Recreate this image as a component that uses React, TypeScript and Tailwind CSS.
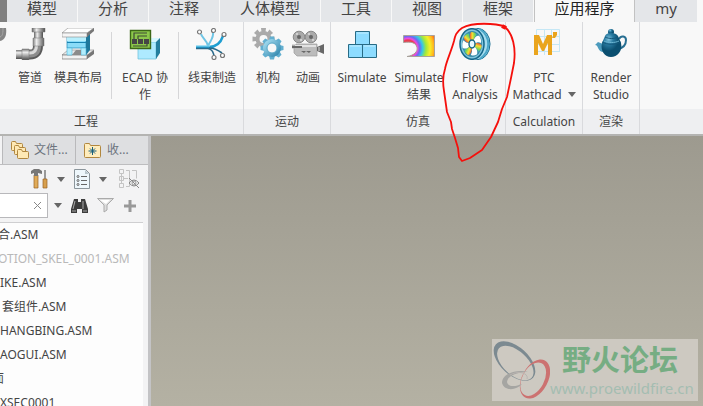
import type { ReactNode } from "react";

const PipeIcon = () => (
  <svg width="32" height="32" viewBox="0 0 32 32">
    <defs>
      <linearGradient id="pv" x1="0" x2="1" y1="0" y2="0"><stop offset="0" stopColor="#666" /><stop offset=".35" stopColor="#eee" /><stop offset="1" stopColor="#4c4c4c" /></linearGradient>
      <linearGradient id="ph" x1="0" x2="0" y1="0" y2="1"><stop offset="0" stopColor="#777" /><stop offset=".3" stopColor="#eee" /><stop offset="1" stopColor="#4c4c4c" /></linearGradient>
    </defs>
    <g fill="none">
      <path d="M14 26.500h2q8 0 8-9" stroke="#5a5a5a" strokeWidth="10" />
      <path d="M14 26h2q7.500 0 7.500-8.500" stroke="#8c8c8c" strokeWidth="7" />
      <path d="M14 25h2q6.500 0 6.500-7.500" stroke="#dadada" strokeWidth="3" />
    </g>
    <path d="M2 22h6v9H2z" fill="url(#ph)" />
    <path d="M8 21h7v11H8z" fill="url(#ph)" stroke="#777" strokeWidth=".5" />
    <path d="M20 3h9v8h-9z" fill="url(#pv)" />
    <path d="M18 0h13v4H18zM19 10h11v8H19z" fill="url(#pv)" stroke="#777" strokeWidth=".5" />
  </svg>
);

const MoldIcon = () => (
  <svg width="32" height="32" viewBox="0 0 32 32">
    <path d="M0 27l6-5h26l-6 5z" fill="#e8e8e8" stroke="#888" strokeWidth=".6" />
    <path d="M0 27h25v4H0z" fill="#f2f2f2" stroke="#777" strokeWidth=".7" /><path d="M25 27l7-5v4l-7 5z" fill="#777" />
    <path d="M5 8h19v12H5z" fill="#8bdcf8" stroke="#1c87b5" strokeWidth=".7" />
    <path d="M24 8l4-3v17l-4 5z" fill="#1f789c" />
    <path d="M5 9h19v4H5z" fill="#b8effd" /><path d="M5 14.500h19" stroke="#1a84b3" />
    <path d="M5 20h5v7H5zM19 20h5v7h-5z" fill="#b2edfc" stroke="#4fb7da" strokeWidth=".6" />
    <path d="M10 27l4-5h5v5z" fill="#8b8b8b" />
    <path d="M0 5l6-5h26l-7 5z" fill="#fff" stroke="#888" strokeWidth=".6" /><path d="M0 5h25v4H0z" fill="#f5f5f5" stroke="#888" strokeWidth=".6" /><path d="M25 5l7-5v3l-7 6z" fill="#777" />
  </svg>
);

const EcadIcon = () => (
  <svg width="32" height="32" viewBox="0 0 32 32">
    <path d="M9 14h18v17H9z" fill="#aeeaff" stroke="#68bfd9" strokeWidth=".7" /><path d="M9 14l5-4h17l-4 4z" fill="#d7f7ff" /><path d="M27 14l4-4v15l-4 6z" fill="#247e9d" />
    <path d="M1.500 2.500h20v18h-20z" fill="#8cc84b" stroke="#3c6817" strokeWidth="1.400" />
    <path d="M5 11V5h13M9 11V8h9M18 14v4H4" fill="none" stroke="#3f4a35" strokeWidth="1.200" />
    <path d="M3 11h5v5H3zM9 11h5v5H9zM15 11h5v5h-5z" fill="#454545" />
  </svg>
);

const HarnessIcon = () => (
  <svg width="32" height="32" viewBox="0 0 32 32" fill="none">
    <path d="M12 18C11 12 6 10 5 6M12 18c2-5 6-8 5-14" stroke="#6fc5e5" strokeWidth="2" />
    <path d="M0 19h13c8 0 12-5 14-11" stroke="#1e9ed1" strokeWidth="2.400" /><path d="M0 20.500h12c5 1 5 4 6 7M13 20c6 0 9 2 13 5" stroke="#28698a" strokeWidth="1.600" />
    <path d="M0 18h14" stroke="#8fdcf6" />
    <g fill="#fff" stroke="#777" strokeWidth="1.200"><circle cx="3.500" cy="4" r="2" /><circle cx="17.500" cy="2.500" r="2" /><circle cx="28" cy="6.500" r="2" /><circle cx="26.500" cy="27.500" r="2" /><circle cx="18" cy="29.500" r="2" /></g>
  </svg>
);

const teeth = [0, 45, 90, 135, 180, 225, 270, 315];
const MechanismIcon = () => (
  <svg width="32" height="32" viewBox="0 0 32 32">
    <defs><linearGradient id="gear" x1="0" x2="1" y1="0" y2="1"><stop stopColor="#b5e9fa" /><stop offset="1" stopColor="#247ca5" /></linearGradient></defs>
    <g fill="#aaa">{teeth.map((a) => <path key={a} d="M9 0h5l-.5 4h-4z" transform={`rotate(${a} 11.500 11)`} />)}<circle cx="11.500" cy="11" r="8" /></g>
    <circle cx="11.500" cy="11" r="4" fill="#f8f8f8" />
    <g fill="#62afd0">{teeth.map((a) => <path key={a} d="M18 8.500h4l1 4h-6z" transform={`rotate(${a} 20 20)`} />)}</g>
    <circle cx="20" cy="20" r="9" fill="url(#gear)" />
    <circle cx="20" cy="20" r="5" fill="#f8f8f8" stroke="#5aa9c9" />
  </svg>
);

const CameraIcon = () => (
  <svg width="32" height="32" viewBox="0 0 32 32">
    <g fill="#aaa" stroke="#8a8a8a"><circle cx="7" cy="9" r="5.800" /><circle cx="19" cy="9" r="5.800" /></g>
    <g fill="#666"><circle cx="7" cy="9" r="2" /><circle cx="19" cy="9" r="2" /></g>
    <g fill="#ddd"><circle cx="5" cy="6" r="1" /><circle cx="9" cy="12" r="1" /><circle cx="17" cy="6" r="1" /><circle cx="21" cy="12" r="1" /></g>
    <path d="M0 17h4v-1h21v12H5l-3-3v-5H0z" fill="#bcbcbc" stroke="#9b9b9b" strokeWidth=".7" /><path d="M3 17h21v2H3z" fill="#e2e2e2" />
    <path d="M0 18h10v2H0zM9 23h5l-2 2zM14 23h5l-2 2zM25 19l7-3v10l-7-3z" fill="#686868" /><path d="M27 19v4" stroke="#ddd" />
  </svg>
);

const CubesIcon = () => (
  <svg width="32" height="32" viewBox="0 0 32 32" fill="#8ddcff" stroke="#286b85">
    <path d="M9.500 3.500h14v13h-14zM2.500 16.500h14v13h-14zM16.500 16.500h14v13h-14z" />
    <path d="M11 5h11M4 18h11M18 18h11" stroke="#c4efff" />
  </svg>
);

const ResultIcon = () => (
  <svg width="32" height="32" viewBox="0 0 32 32">
    <defs><radialGradient id="heat" gradientUnits="userSpaceOnUse" cx="5" cy="20" r="28"><stop offset=".28" stopColor="#e93b4c" /><stop offset=".34" stopColor="#ee4bdf" /><stop offset=".42" stopColor="#6b6af1" /><stop offset=".52" stopColor="#35c8e8" /><stop offset=".65" stopColor="#a4e83a" /><stop offset=".79" stopColor="#f6f029" /><stop offset=".92" stopColor="#ffb51d" /><stop offset="1" stopColor="#ff7519" /></radialGradient></defs>
    <path d="M.500 7.500h31v21H4c7-1 11-5 10-9-1-5-6-6-13.500-5z" fill="url(#heat)" stroke="#a8a29c" />
  </svg>
);

const FlowIcon = () => (
  <svg width="32" height="32" viewBox="0 0 32 32">
    <defs><linearGradient id="blade" x1="0" x2="1" y1="0" y2="0"><stop stopColor="#e95035" /><stop offset=".35" stopColor="#f6df32" /><stop offset=".7" stopColor="#78d655" /><stop offset="1" stopColor="#35b9ce" /></linearGradient></defs>
    <ellipse cx="19" cy="16" rx="12" ry="15.500" fill="#a6ddef" stroke="#126c91" /><path d="M21 1c11 8 11 22 0 30" fill="none" stroke="#4ba7c8" strokeWidth="2" />
    <ellipse cx="13" cy="16" rx="12" ry="15.300" fill="#80c6de" stroke="#14678a" strokeWidth="1.500" /><ellipse cx="13" cy="16" rx="10" ry="13" fill="#398ba7" />
    <g transform="translate(13 16) scale(.82 1)">{[0, 51, 103, 154, 206, 257, 309].map((a, i) => <path key={a} d="M0-2C-4-6-3-10-1-12c3 0 6 1 7 3-2 1-4 3-4 7z" fill={i % 2 ? "#fff" : "url(#blade)"} transform={`rotate(${a})`} />)}</g>
    <ellipse cx="13" cy="16" rx="3" ry="4" fill="#e9f9ff" stroke="#176785" strokeWidth="1.400" />
  </svg>
);

const MathcadIcon = () => (
  <svg width="32" height="32" viewBox="0 0 32 32">
    <path d="M8.500 8V1.500h23V24M8 8.500h23M16.500 1v26M23.500 1v26M8 16.500h23M8 23.500h23" fill="none" stroke="#c5e7f5" />
    <path d="M6 7h5l4 9 4-9h5v20h-4V15l-4 8h-2l-4-8v12H6zM25 4h4v3l-2 3h-3l1-2z" fill="#eaa51e" />
  </svg>
);

const TeapotIcon = () => (
  <svg width="32" height="32" viewBox="0 0 32 32">
    <defs><radialGradient id="tea" cx=".36" cy=".25"><stop stopColor="#83c6e2" /><stop offset=".45" stopColor="#297ba1" /><stop offset="1" stopColor="#0b4f70" /></radialGradient></defs>
    <path d="M24 11c2-4 7-3 7 1 0 5-3 8-8 9" fill="none" stroke="#286f92" strokeWidth="2" />
    <path d="M8 16l-5-2-3 3c4 0 2 7 9 7z" fill="#4c9bbd" /><circle cx="16" cy="4" r="3" fill="url(#tea)" />
    <path d="M10 8c1-4 11-4 13 0l3 7c2 8-4 14-10 14S5 23 7 15z" fill="url(#tea)" />
    <path d="M10 9c4 2 9 2 13 0M7 14c6 3 13 3 19 0" fill="none" stroke="#14577a" /><path d="M9 13c4 2 11 2 15 0" fill="none" stroke="#6db6d3" />
  </svg>
);

const Caret = () => <svg width="8" height="5" viewBox="0 0 8 5"><path d="M0 0h8L4 5z" fill="#666" /></svg>;

function Tool({ icon, width, children }: { icon: ReactNode; width: string; children: ReactNode }) {
  return (
    <button className={`flex shrink-0 flex-col items-center gap-[9px] pt-1.5 text-xs leading-[17px] whitespace-nowrap ${width}`}>
      {icon}
      <span>{children}</span>
    </button>
  );
}

function Group({ name, width, children, footer = "justify-center" }: { name: string; width: string; children: ReactNode; footer?: string }) {
  return (
    <section aria-label={name} className={`flex shrink-0 flex-col border-r border-[#d9dadd] ${width}`}>
      <div className="flex h-[87px]">{children}</div>
      <h2 className={`flex h-[25px] items-center bg-[#eeeff1] text-xs ${footer}`}>{name}</h2>
    </section>
  );
}

const Divider = ({ width }: { width: string }) => <div className={`flex shrink-0 justify-center pt-2.5 ${width}`}><div className="h-[67px] w-px bg-[#d6d6d8]" /></div>;

const FolderShape = ({ x, y }: { x: number; y: number }) => <path transform={`translate(${x} ${y})`} d="M.500 1.500q0-1 1-1h3l1 2h5q1 0 1 1v5q0 1-1 1h-9q-1 0-1-1z" fill="#ffe9b4" stroke="#b1873f" />;

const ribbonTabs = [
  ["模型", "w-[71px]"], ["分析", "w-[71px]"], ["注释", "w-[71px]"], ["人体模型", "w-[101px]"], ["工具", "w-[71px]"], ["视图", "w-[71px]"], ["框架", "w-[71px]"],
];

const treeItems = [
  ["合.ASM", "-ml-0.5"], ["OTION_SKEL_0001.ASM", "-ml-0.5 text-[#b9b9b9]"], ["IKE.ASM", ""], ["套组件.ASM", "pl-0.5"], ["HANGBING.ASM", ""], ["AOGUI.ASM", ""], ["面", "-ml-2"], ["XSEC0001", ""],
];

export default function App() {
  return (
    <div className="relative flex h-screen flex-col overflow-hidden bg-[#f8f8f8] font-['Noto_Sans','Noto_Sans_CJK_SC',sans-serif] text-[#444]">
      <nav className="flex h-[22px] shrink-0 text-[15px] leading-[17px] whitespace-nowrap">
        <div className="w-[7px] shrink-0 bg-[#808080]" />
        {ribbonTabs.map(([name, width]) => (
          <button key={name} className={`flex shrink-0 justify-center border-r border-[#f8f8f8] bg-[#e4e6e9] ${width}`}>{name}</button>
        ))}
        <button className="flex w-[101px] shrink-0 justify-center border-x border-[#c2c2c2] text-[#222]">应用程序</button>
        <button className="flex w-[62px] shrink-0 justify-center bg-[#e4e6e9]">my</button>
      </nav>

      <header className="flex h-[114px] shrink-0 border-b-2 border-[#b4b4b2]">
        <Group name="工程" width="w-[244px]" footer="pl-[74px]">
          <div className="w-[10px] shrink-0 pt-1.5">
            <svg width="7" height="14" viewBox="0 0 7 14"><path d="M0 0h6c1 7-1 12-6 13z" fill="#858585" /><path d="M0 9c3-1 3-5 3-9" stroke="#a8a8a8" fill="none" /></svg>
          </div>
          <Tool icon={<PipeIcon />} width="w-10">管道</Tool>
          <Tool icon={<MoldIcon />} width="w-14">模具布局</Tool>
          <Divider width="w-2.5" />
          <Tool icon={<EcadIcon />} width="w-[58px]">ECAD 协<br />作</Tool>
          <Divider width="w-2" />
          <Tool icon={<HarnessIcon />} width="w-[60px]">线束制造</Tool>
        </Group>
        <Group name="运动" width="w-[87px]">
          <div className="w-1 shrink-0" />
          <Tool icon={<MechanismIcon />} width="w-10">机构</Tool>
          <Tool icon={<CameraIcon />} width="w-10">动画</Tool>
        </Group>
        <Group name="仿真" width="w-[175px]">
          <Tool icon={<CubesIcon />} width="w-[62px]">Simulate</Tool>
          <Tool icon={<ResultIcon />} width="w-[52px]">Simulate<br />结果</Tool>
          <Tool icon={<FlowIcon />} width="w-[60px]">Flow<br />Analysis</Tool>
        </Group>
        <Group name="Calculation" width="w-[77px]">
          <Tool icon={<MathcadIcon />} width="w-[76px]">
            PTC<br /><span className="flex items-center gap-1.5">Mathcad <Caret /></span>
          </Tool>
        </Group>
        <Group name="渲染" width="w-[57px]">
          <Tool icon={<TeapotIcon />} width="w-14">Render<br />Studio</Tool>
        </Group>
        <div className="flex grow flex-col justify-end"><div className="h-[25px] bg-[#eeeff1]" /></div>
      </header>

      <div className="flex min-h-0 grow">
        <aside className="flex w-[151px] shrink-0 flex-col border-r-[3px] border-[#c3c3c5] bg-[#f3f3f4] text-xs">
          <div className="flex h-[29px] shrink-0 border-b border-[#bdbdbf] pl-0.5 text-[#6c737d]">
            <button className="flex w-[74px] items-center gap-1 border-x border-[#b9b9bb] bg-[#dedfe1] pl-2">
              <svg width="19" height="20" viewBox="0 0 19 20"><FolderShape x={0} y={1} /><FolderShape x={3} y={5} /><FolderShape x={6} y={9} /></svg>
              文件...
            </button>
            <button className="flex w-[72px] items-center gap-1.5 bg-[#dedfe1] pl-2">
              <svg width="17" height="16" viewBox="0 0 17 16"><path d="M.500 2.500q0-1 1-1h4l1 2h9q1 0 1 1v10q0 1-1 1h-14q-1 0-1-1z" fill="#ffedbd" stroke="#b1873f" /><path d="M8.500 5v8M4.500 9h8M6 6.500l5 5M11 6.500l-5 5" stroke="#165e7c" /></svg>
              收...
            </button>
          </div>

          <div className="flex h-7 shrink-0 items-center pl-[30px]">
            <button aria-label="工具" className="flex w-[27px]">
              <svg width="18" height="20" viewBox="0 0 18 20"><path d="M4 6h4v13H4z" fill="#e0ab58" stroke="#986222" strokeWidth=".7" /><path d="M1 2l3-2h5l3 2v3l-4-1v3H4V4L1 5z" fill="#777" /><path d="M14 1h2v10h-2z" fill="#999" /><path d="M13 10h4v9h-4z" fill="#d79f4d" stroke="#986222" strokeWidth=".7" /></svg>
            </button>
            <button aria-label="工具选项" className="w-[17px]"><Caret /></button>
            <button aria-label="显示设置" className="flex w-[25px]">
              <svg width="16" height="20" viewBox="0 0 16 20"><path d="M.500.500h11l4 4v15H.500z" fill="#eef7fc" stroke="#8b959b" /><path d="M11 1v4h4" fill="#b8c6cc" /><g fill="none" stroke="#666"><circle cx="4" cy="7.500" r="1" /><circle cx="4" cy="11.500" r="1" /><circle cx="4" cy="15.500" r="1" /><path d="M7 7.500h6M7 11.500h6M7 15.500h6" /></g></svg>
            </button>
            <button aria-label="显示选项" className="w-5"><Caret /></button>
            <button aria-label="隐藏树列">
              <svg width="21" height="20" viewBox="0 0 21 20" fill="none" stroke="#c4c4c4"><path d="M.500.500h4v4h-4zM.500 7.500h4v4h-4zM.500 14.500h4v4h-4zM2.500 5v9M5 9.500h4M7 1.500h3.500v16H7M13 1.500h4.500v8" /><path d="M10 14q5-6 10 0-5 6-10 0zM10 9l10 10" stroke="#888" /><circle cx="15" cy="14" r="2" stroke="#999" /></svg>
            </button>
          </div>

          <div className="flex h-[25px] shrink-0 items-center">
            <label className="relative flex h-[25px] w-12 items-center border border-l-0 border-[#b8b8bb] bg-white">
              <input aria-label="搜索" className="h-full w-full outline-none" />
              <button aria-label="清除" className="absolute right-[5px]"><svg width="9" height="9" viewBox="0 0 9 9"><path d="M1 1l7 7M8 1L1 8" stroke="#888" /></svg></button>
            </label>
            <button aria-label="搜索选项" className="ml-1.5 w-[17px]"><Caret /></button>
            <button aria-label="查找" className="w-[26px]">
              <svg width="17" height="16" viewBox="0 0 17 16"><path d="M3 1h4v3h3V1h4l3 10v4h-6v-4H6v4H0v-4z" fill="#3c3c3c" /><path d="M4 3L2 11M12 3v8M1 13h4M12 13h4" stroke="#aaa" /></svg>
            </button>
            <button aria-label="过滤" className="w-[27px]">
              <svg width="17" height="15" viewBox="0 0 17 15"><path d="M.500.500h16L10 7v5l-3 2V7z" fill="#ddd" stroke="#aaa" /><path d="M3 2h10L9 6" fill="#fff" /></svg>
            </button>
            <button aria-label="添加"><svg width="12" height="12" viewBox="0 0 12 12"><path d="M4.500 0h3v4.500H12v3H7.500V12h-3V7.500H0v-3h4.500z" fill="#999" /></svg></button>
          </div>

          <ul className="mt-1 mr-[5px] grow overflow-hidden border-t border-[#cfcfd1] bg-[#fdfdfd] whitespace-nowrap">
            {treeItems.map(([name, style]) => <li key={name} className={`h-6 leading-6 ${style}`}>{name}</li>)}
          </ul>
        </aside>

        <main className="relative grow bg-linear-to-b from-[#9d9a8f] to-[#b4b1a3]">
          <div className="absolute right-[5px] bottom-[5px] flex h-[62px] w-[206px] bg-[#cdc9c1]">
            <svg className="shrink-0" width="58" height="62" viewBox="0 0 58 62" fill="none">
              <g transform="translate(22.500 22) rotate(42)">
                <path fillRule="evenodd" fill="#7c8a91" d="M-25 0a25 14 0 1 1 50 0a25 14 0 1 1-50 0zM-20 1a22 12 0 1 0 44 0a22 12 0 1 0-44 0z" />
              </g>
              <g transform="translate(43 40) rotate(-62)">
                <path fillRule="evenodd" fill="#cc7271" d="M-21 0a21 13 0 1 1 42 0a21 13 0 1 1-42 0zM-19-1.500a18 11 0 1 0 36 0a18 11 0 1 0-36 0z" />
              </g>
              <path fillRule="evenodd" fill="#a5a5a2" d="M36 33C26 30 10 34 10 44c2 8 14 8 20 1-7 3-14 3-15-2 1-7 11-10 21-10z" />
              <path d="M18 36c8-5 19-2 17 4" stroke="#bab4b1" />
            </svg>
            <div className="flex flex-col whitespace-nowrap">
              <strong className="pl-3 pt-0.5 text-[29px] leading-[38px] text-[#76ad83]">野火论坛</strong>
              <span className="text-[15px] leading-[18px] text-[#a4bdb1]">www.proewildfire.cn</span>
            </div>
          </div>
        </main>
      </div>

      <svg className="pointer-events-none absolute top-[15px] left-[430px]" width="100" height="150" viewBox="0 0 100 150" fill="none" stroke="#f5100c" strokeWidth="1.800" strokeLinejoin="round">
        <path d="M76 12C65 8 43 7 32 13C26 17 25 21 24 26C21 37 16 47 15 54C13 60 13 70 14 76L17 97L21 107L22 114L25 123L28 133L29 142L32 146L40 143L52 135L61 122L68 107L72 94L77 82L81 63L84 48C86 33 83 19 75 12" />
        <path d="M72 11l4 2" strokeWidth="4" />
      </svg>
    </div>
  );
}
